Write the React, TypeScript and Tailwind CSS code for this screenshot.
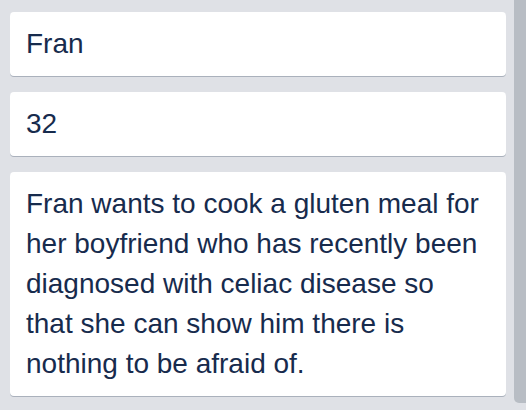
import React from "react";

const lines = [
  "Fran wants to cook a gluten meal for",
  "her boyfriend who has recently been",
  "diagnosed with celiac disease so",
  "that she can show him there is",
  "nothing to be afraid of.",
];

const Card = ({ children }: { children: React.ReactNode }) => (
  <div className="bg-white rounded-[4px] px-4 py-3 shadow-[0_1px_0_#aab1bc] text-[28px] leading-[40px] text-[#172b4d]">
    {children}
  </div>
);

const App = () => {
  return (
    <div
      className="w-[526px] h-[410px] bg-[#dfe1e6] flex overflow-hidden"
      style={{ fontFamily: '"Liberation Sans", Arial, sans-serif' }}
    >
      {/* Cards column */}
      <div className="w-[496px] ml-[10px] pt-3 flex flex-col gap-4">
        <Card>Fran</Card>
        <Card>32</Card>
        <Card>
          {lines.map((l) => (
            <span key={l} className="block whitespace-nowrap">
              {l}
            </span>
          ))}
        </Card>
      </div>
      {/* Next list edge */}
      <div className="ml-2 w-3 h-[403px] bg-[#b8bdc4] rounded-bl-[5px]" />
    </div>
  );
};

export default App;
